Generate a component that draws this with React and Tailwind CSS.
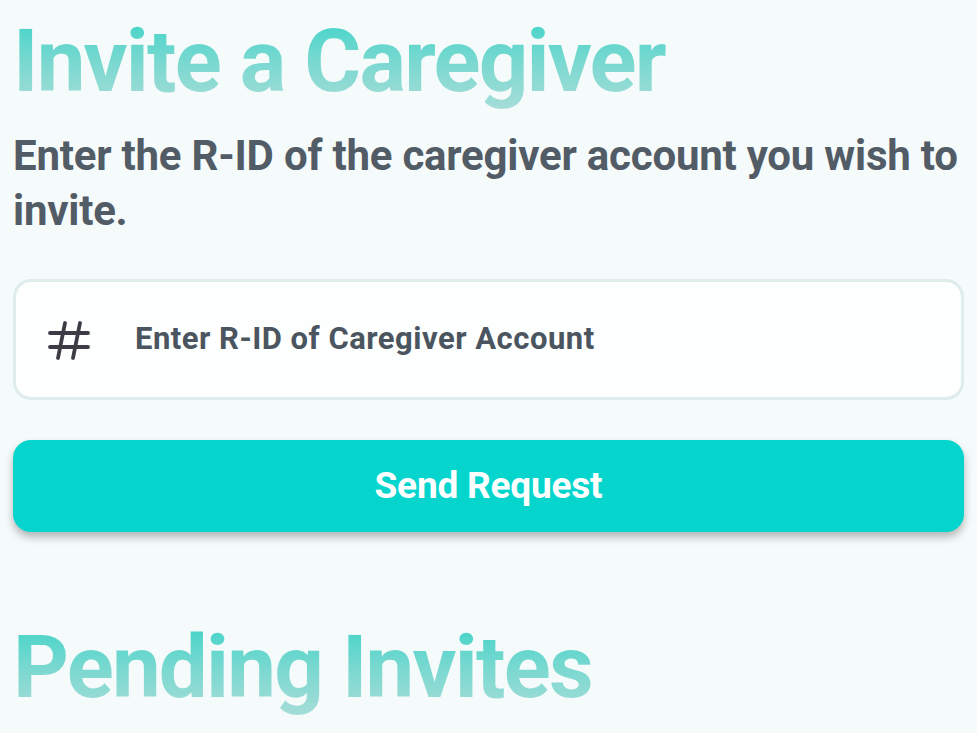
export default function App() {
  const heading =
    "text-[87px] leading-[100px] font-bold tracking-[-1.8px] bg-gradient-to-b from-[#2cd3c8] to-[#a6ddd8] bg-clip-text text-transparent";

  return (
    <div className="min-h-screen bg-[#f5fafa] px-[13px] pt-[11px] pb-10 font-['Roboto',sans-serif]">
      <h1 className={heading}>Invite a Caregiver</h1>
      <p className="mt-[17px] text-[42px] leading-[55px] font-bold tracking-[-0.22px] text-[#525c66]">
        Enter the R-ID of the caregiver account you wish to invite.
      </p>

      <div className="mt-[41px] h-[121px] flex items-center rounded-[18px] border-[3px] border-[#dfecec] bg-[#fdfefe] pl-[31px] pr-6">
        <svg width="44" height="40" viewBox="0 0 44 40" fill="none" stroke="#3d3b45" strokeWidth="3.8" strokeLinecap="round">
          <line x1="3" y1="13" x2="41" y2="13" />
          <line x1="3" y1="27" x2="41" y2="27" />
          <line x1="18" y1="3" x2="11" y2="38" />
          <line x1="33" y1="3" x2="26" y2="38" />
        </svg>
        <input
          type="text"
          placeholder="Enter R-ID of Caregiver Account"
          className="ml-[44px] flex-1 bg-transparent outline-none text-[31px] font-bold tracking-[0.5px] text-[#4b5560] placeholder:text-[#4b5560]"
        />
      </div>

      <button className="mt-[40px] w-full h-[92px] rounded-[18px] bg-[#05d5cd] text-white text-[37px] font-bold tracking-[-0.2px] shadow-[0_5px_8px_rgba(0,0,0,0.28)]">
        Send Request
      </button>

      <h2 className={`mt-[85px] ${heading}`}>Pending Invites</h2>
    </div>
  );
}
